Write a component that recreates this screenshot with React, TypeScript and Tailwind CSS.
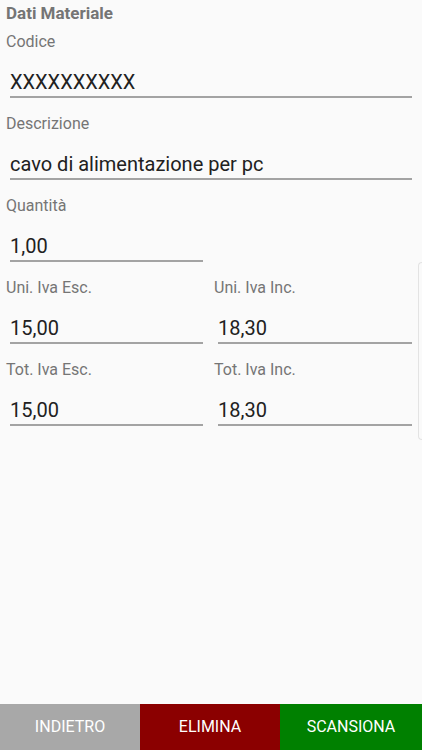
import React from "react";

function Field({ label, value, className = "" }: { label: string; value: string; className?: string }) {
  return (
    <div className={"flex flex-col " + className}>
      <div className="mt-[3px] h-[20px] text-[16px] leading-[20px] text-[#757575] pl-[6px]">{label}</div>
      <div className="mt-[16px] ml-[10px] border-b-2 border-[#a3a3a3] text-[20px] leading-[28px] text-[#212121]">
        {value}
      </div>
    </div>
  );
}

export default function App() {
  return (
    <div
      className="relative w-[422px] h-[750px] flex flex-col bg-[#fafafa]"
      style={{ fontFamily: "Roboto, 'Noto Sans', sans-serif" }}
    >
      <div className="flex-1 flex flex-col">
        <div className="h-[25px] pl-[6px] pt-[1px] text-[17px] leading-[24px] font-bold text-[#757575]">Dati Materiale</div>
        <div className="flex flex-col gap-[13px] mt-[4px] pr-[10px]">
          <Field label="Codice" value="XXXXXXXXXX" />
          <Field label="Descrizione" value="cavo di alimentazione per pc" />
          <div className="flex">
            <Field label="Quantità" value="1,00" className="w-[203px]" />
          </div>
          <div className="flex">
            <Field label="Uni. Iva Esc." value="15,00" className="w-[203px]" />
            <Field label="Uni. Iva Inc." value="18,30" className="flex-1 ml-[5px]" />
          </div>
          <div className="flex">
            <Field label="Tot. Iva Esc." value="15,00" className="w-[203px]" />
            <Field label="Tot. Iva Inc." value="18,30" className="flex-1 ml-[5px]" />
          </div>
        </div>
      </div>
      <div className="absolute right-0 top-[262px] w-[4px] h-[178px] rounded-l-[4px] border border-r-0 border-[#e3e3e3]" />
      <div className="flex h-[46px] text-[16px] text-white">
        <div className="w-[140px] bg-[#a8a8a8] flex items-center justify-center">INDIETRO</div>
        <div className="w-[140px] bg-[#8b0000] flex items-center justify-center">ELIMINA</div>
        <div className="flex-1 bg-[#008000] flex items-center justify-center">SCANSIONA</div>
      </div>
    </div>
  );
}
